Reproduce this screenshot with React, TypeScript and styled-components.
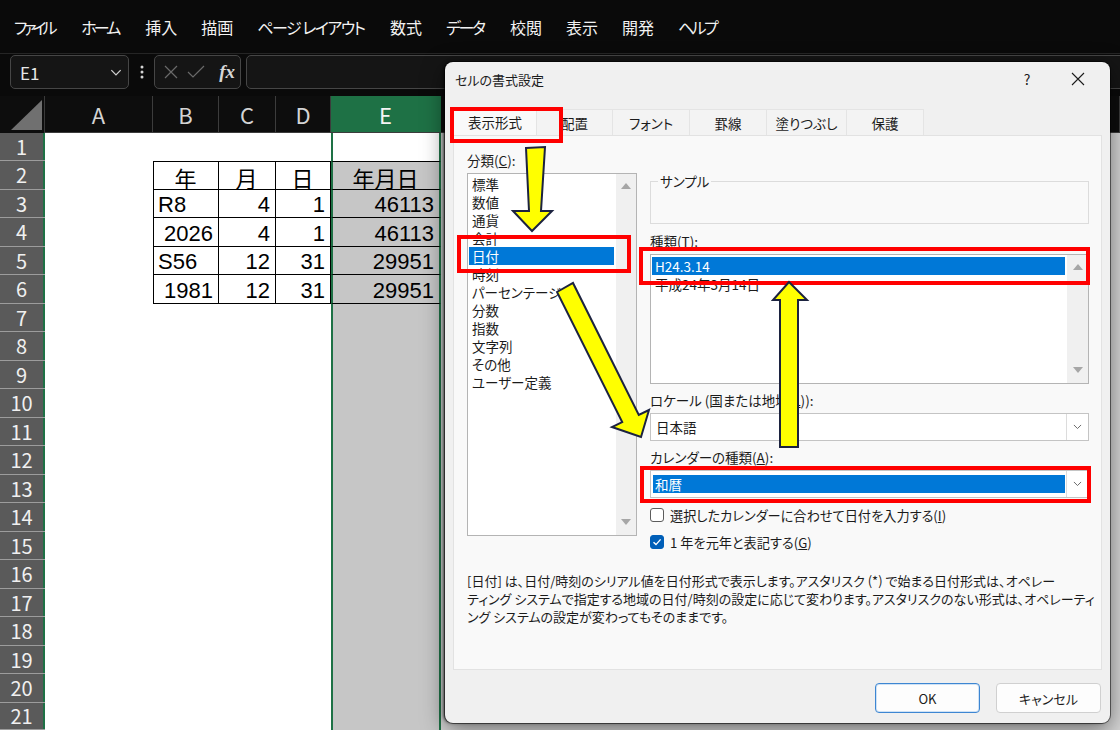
import React from "react";
import styled, { createGlobalStyle } from "styled-components";

const UI = `"Noto Sans CJK JP", "Noto Sans", sans-serif`;
const CELL = `"Liberation Sans", "Noto Sans CJK JP", sans-serif`;
const GREEN = "#1e7145";
const BLUE = "#0078d7";

const GlobalStyle = createGlobalStyle`
  html, body { margin: 0; padding: 0; background: #0a0a0a; }
  #root { width: 1120px; height: 730px; }
`;

const Page = styled.div`
  position: relative;
  width: 1120px;
  height: 730px;
  overflow: hidden;
  background: #0a0a0a;
  display: flex;
  flex-direction: column;
`;

/* ---------- ribbon tabs ---------- */

const MenuBar = styled.nav`
  height: 53px;
  flex-shrink: 0;
  display: flex;
  align-items: center;
  gap: 24px;
  padding-left: 14px;
  border-bottom: 1px solid #252525;
  font-family: ${UI};
  font-feature-settings: "palt";
  font-size: 16px;
  color: #f2f2f2;
`;

const MenuItem = styled.span<{ $track?: number }>`
  white-space: pre;
  letter-spacing: ${(p) => p.$track ?? 0}px;
  margin-right: ${(p) => -(p.$track ?? 0)}px;
`;

/* ---------- formula bar ---------- */

const FormulaBar = styled.div`
  height: 42px;
  flex-shrink: 0;
  box-sizing: border-box;
  padding: 1px 0 0 10px;
  display: flex;
  align-items: flex-start;
`;

const Field = styled.div`
  height: 34px;
  box-sizing: border-box;
  border: 1px solid #464646;
  border-radius: 5px;
  background: #151515;
  display: flex;
  align-items: center;
`;

const NameBox = styled(Field)`
  width: 119px;
  padding: 0 6px 0 9px;
  justify-content: space-between;
  color: #e8e8e8;
  font: 17px ${UI};
`;

const MoreDots = styled.div`
  width: 25px;
  height: 34px;
  display: flex;
  align-items: center;
  justify-content: center;
`;

const FxBox = styled(Field)`
  width: 87px;
  padding: 0 5px 0 8px;
  gap: 8px;
`;

const FxLabel = styled.span`
  margin-left: auto;
  font: italic bold 19px "Liberation Serif", serif;
  color: #d6d6d6;
`;

const FormulaInput = styled(Field)`
  flex: 1;
  margin-left: 5px;
  margin-right: -12px;
`;

/* ---------- sheet ---------- */

const Sheet = styled.div`
  flex: 1;
  min-height: 0;
  display: grid;
  grid-template-columns: 45px 108px 66px 57px 55px 110px 1fr;
  grid-template-rows: 37px repeat(10, 28px 29px) 27px;
  background: #fff;
`;

const Corner = styled.div`
  background: #0d0d0d;
  border-right: 1px solid #3a3a3a;
  display: flex;
  align-items: flex-end;
  justify-content: flex-end;
  padding: 0 2px 3px 0;
`;

const CornerTriangle = styled.div`
  width: 31px;
  height: 30px;
  background: #707070;
  clip-path: polygon(100% 0, 100% 100%, 0 100%);
`;

const ColHead = styled.div<{ $active?: boolean }>`
  box-sizing: border-box;
  background: ${(p) => (p.$active ? GREEN : "#0d0d0d")};
  color: ${(p) => (p.$active ? "#f4f4f4" : "#d4d4d4")};
  border-right: 1px solid ${(p) => (p.$active ? GREEN : "#3c3c3c")};
  border-bottom: 1px solid #3c3c3c;
  display: flex;
  align-items: center;
  justify-content: center;
  font: 22px ${UI};
`;

const RowHead = styled.div`
  box-sizing: border-box;
  background: #5a5a5a;
  color: #f0f0f0;
  border-bottom: 1px solid #9c9c9c;
  box-shadow: inset -2px 0 ${GREEN};
  display: flex;
  align-items: center;
  justify-content: center;
  padding-right: 2px;
  font: 20px/24px ${UI};
`;

type Align = "left" | "right" | "center";

const Cell = styled.div<{
  $align?: Align;
  $boxed?: boolean;
  $top?: boolean;
  $left?: boolean;
  $sel?: boolean;
  $colE?: boolean;
  $shade?: boolean;
}>`
  box-sizing: border-box;
  display: flex;
  align-items: center;
  justify-content: ${(p) =>
    p.$align === "right" ? "flex-end" : p.$align === "center" ? "center" : "flex-start"};
  padding: 3px 5px 0 4px;
  font: 22px ${CELL};
  color: #000;
  white-space: nowrap;
  background: ${(p) => (p.$sel ? "#c6c6c6" : p.$shade ? "#d4d4d4" : "#fff")};
  border-bottom: ${(p) => (p.$boxed ? "1px solid #000" : "none")};
  border-top: ${(p) => (p.$top ? "1px solid #000" : "none")};
  border-left: ${(p) => (p.$colE ? `2px solid ${GREEN}` : p.$left ? "1px solid #000" : "none")};
  border-right: ${(p) => (p.$colE ? `2px solid ${GREEN}` : p.$boxed ? "1px solid #000" : "none")};
`;

/* ---------- dialog ---------- */

const Dialog = styled.section`
  position: absolute;
  left: 445px;
  top: 62px;
  width: 665px;
  height: 661px;
  box-sizing: border-box;
  padding: 0 8px;
  background: #f0f0f0;
  border-radius: 8px;
  box-shadow: 0 0 0 1px rgba(0, 0, 0, 0.5), -2px 0 3px rgba(0, 0, 0, 0.5), 0 6px 22px rgba(0, 0, 0, 0.5);
  display: flex;
  flex-direction: column;
  font-family: ${UI};
  font-feature-settings: "palt";
  font-size: 13.5px;
  color: #1b1b1b;
`;

const TitleBar = styled.header`
  height: 34px;
  display: flex;
  align-items: center;
  padding-left: 2px;
`;

const Title = styled.span`
  flex: 1;
  font-size: 13px;
`;

const HelpMark = styled.span`
  width: 30px;
  text-align: center;
  font-size: 14px;
  margin-right: 12px;
`;

const CloseBtn = styled.span`
  width: 48px;
  display: flex;
  justify-content: center;
`;

const TabStrip = styled.div`
  margin-top: 12px;
  height: 27px;
  display: flex;
  align-items: flex-end;
`;

const Tab = styled.div<{ $w: number; $active?: boolean }>`
  width: ${(p) => p.$w}px;
  height: ${(p) => (p.$active ? 27 : 26)}px;
  box-sizing: border-box;
  display: flex;
  align-items: center;
  justify-content: center;
  background: ${(p) => (p.$active ? "#f9f9f9" : "#f3f3f3")};
  border: 1px solid #e4e4e4;
  border-bottom: none;
  margin-right: -1px;
  white-space: nowrap;
`;

const Panel = styled.div`
  height: 535px;
  box-sizing: border-box;
  background: #f9f9f9;
  border: 1px solid #e2e2e2;
  padding: 15px 14px 0 13px;
`;

const Columns = styled.div`
  display: grid;
  grid-template-columns: 170px 439px;
  column-gap: 13px;
  align-items: start;
`;

const Column = styled.div`
  display: flex;
  flex-direction: column;
`;

const Label = styled.div<{ $gap?: number }>`
  height: 18px;
  line-height: 18px;
  margin-top: ${(p) => p.$gap ?? 0}px;
  margin-bottom: 4px;
  white-space: nowrap;
`;

const ListBox = styled.div<{ $h: number }>`
  height: ${(p) => p.$h}px;
  box-sizing: border-box;
  border: 1px solid #b4b4b4;
  background: #fff;
  display: flex;
`;

const ListItems = styled.div<{ $padTop?: number }>`
  flex: 1;
  padding: ${(p) => p.$padTop ?? 1}px 2px 0 1px;
`;

const ListItem = styled.div<{ $selected?: boolean }>`
  height: 18px;
  line-height: 18px;
  padding-left: 3px;
  white-space: nowrap;
  background: ${(p) => (p.$selected ? BLUE : "transparent")};
  color: ${(p) => (p.$selected ? "#fff" : "#1b1b1b")};
`;

const ScrollBar = styled.div<{ $w: number }>`
  width: ${(p) => p.$w}px;
  background: #f0f0f0;
  display: flex;
  flex-direction: column;
  align-items: center;
  justify-content: space-between;
  padding: 9px 0 10px;
`;

const ScrollArrow = styled.span<{ $down?: boolean }>`
  width: 0;
  height: 0;
  border-left: 5px solid transparent;
  border-right: 5px solid transparent;
  ${(p) => (p.$down ? "border-top: 6px solid #a6a6a6;" : "border-bottom: 6px solid #a6a6a6;")}
`;

const GroupBox = styled.div`
  position: relative;
  margin-top: 30px;
  height: 43px;
  box-sizing: border-box;
  border: 1px solid #dcdcdc;
`;

const GroupLegend = styled.span`
  position: absolute;
  left: 7px;
  top: -10px;
  padding: 0 2px;
  line-height: 18px;
  background: #f9f9f9;
`;

const Combo = styled.div`
  height: 28px;
  box-sizing: border-box;
  border: 1px solid #c4c4c4;
  background: #fff;
  display: flex;
`;

const ComboValue = styled.div<{ $selected?: boolean }>`
  flex: 1;
  margin: 4px 1px 4px 2px;
  padding-left: ${(p) => (p.$selected ? 2 : 3)}px;
  line-height: 18px;
  background: ${(p) => (p.$selected ? BLUE : "transparent")};
  color: ${(p) => (p.$selected ? "#fff" : "#1b1b1b")};
`;

const ComboButton = styled.div`
  width: 21px;
  border-left: 1px solid #dcdcdc;
  display: flex;
  align-items: center;
  justify-content: center;
`;

const CheckRow = styled.label<{ $gap: number }>`
  margin-top: ${(p) => p.$gap}px;
  height: 18px;
  display: flex;
  align-items: center;
  gap: 6px;
  white-space: nowrap;
  font-size: 13.2px;
`;

const CheckBox = styled.span<{ $checked?: boolean }>`
  width: 14px;
  height: 14px;
  box-sizing: border-box;
  border-radius: 3px;
  border: 1px solid ${(p) => (p.$checked ? "#005fb8" : "#5c5c5c")};
  background: ${(p) => (p.$checked ? "#005fb8" : "#fff")};
  display: flex;
  align-items: center;
  justify-content: center;
`;

const Description = styled.p`
  margin: 21px 0 0;
  font-size: 13px;
  line-height: 18px;
  white-space: nowrap;
`;

const Footer = styled.footer`
  margin-top: 13px;
  display: flex;
  justify-content: flex-end;
  gap: 16px;
  padding-right: 1px;
`;

const Button = styled.button<{ $primary?: boolean }>`
  width: 105px;
  height: 30px;
  border-radius: 4px;
  background: #fdfdfd;
  border: 1px solid ${(p) => (p.$primary ? "#3d86d2" : "#d0d0d0")};
  box-shadow: ${(p) => (p.$primary ? "inset 0 0 0 1px #cfe2f5" : "none")};
  font: 13px ${UI};
  font-feature-settings: "palt";
  color: #1b1b1b;
`;

/* ---------- annotation overlay ---------- */

const Overlay = styled.svg`
  position: absolute;
  left: 0;
  top: 0;
  pointer-events: none;
`;

/* ---------- data ---------- */

const menus: [string, number][] = [
  ["ファイル", -4],
  ["ホーム", -3],
  ["挿入", 0],
  ["描画", 0],
  ["ページ レイアウト", -1.5],
  ["数式", 0],
  ["データ", -2.4],
  ["校閲", 0],
  ["表示", 0],
  ["開発", 0],
  ["ヘルプ", -2.6],
];
const columns = ["A", "B", "C", "D", "E"];

type CellDef = [string, Align];
const table: Record<number, CellDef[]> = {
  2: [["年", "center"], ["月", "center"], ["日", "center"], ["年月日", "center"]],
  3: [["R8", "left"], ["4", "right"], ["1", "right"], ["46113", "right"]],
  4: [["2026", "right"], ["4", "right"], ["1", "right"], ["46113", "right"]],
  5: [["S56", "left"], ["12", "right"], ["31", "right"], ["29951", "right"]],
  6: [["1981", "right"], ["12", "right"], ["31", "right"], ["29951", "right"]],
};

const categories = ["標準", "数値", "通貨", "会計", "日付", "時刻", "パーセンテージ", "分数", "指数", "文字列", "その他", "ユーザー定義"];

const tabs: [string, number][] = [
  ["表示形式", 84], ["配置", 77], ["フォント", 78], ["罫線", 78], ["塗りつぶし", 81], ["保護", 78],
];

function Chevron({ color = "#6a6a6a", size = 9 }: { color?: string; size?: number }) {
  return (
    <svg width={size} height={size / 2 + 1} viewBox="0 0 10 6">
      <polyline points="1,1 5,5 9,1" fill="none" stroke={color} strokeWidth="1.1" />
    </svg>
  );
}

function SheetGrid() {
  const cells: React.ReactNode[] = [];
  cells.push(
    <Corner key="corner">
      <CornerTriangle />
    </Corner>
  );
  columns.forEach((c) => {
    cells.push(<ColHead key={c} $active={c === "E"}>{c}</ColHead>);
  });
  cells.push(<ColHead key="F" />);
  for (let r = 1; r <= 21; r++) {
    cells.push(<RowHead key={`h${r}`}>{r}</RowHead>);
    const row = table[r];
    // column A
    cells.push(<Cell key={`a${r}`} />);
    for (let c = 0; c < 4; c++) {
      const def = row?.[c];
      const isE = c === 3;
      cells.push(
        <Cell
          key={`${r}-${c}`}
          $align={def?.[1]}
          $boxed={!!row}
          $top={r === 2}
          $left={c === 0 && !!row}
          $colE={isE}
          $sel={isE && r > 1}
        >
          {def?.[0]}
        </Cell>
      );
    }
    // column F, mostly hidden behind the dialog
    cells.push(<Cell key={`f${r}`} $shade />);
  }
  return <Sheet>{cells}</Sheet>;
}

function FormatDialog() {
  return (
    <Dialog>
      <TitleBar>
        <Title>セルの書式設定</Title>
        <HelpMark>?</HelpMark>
        <CloseBtn>
          <svg width="14" height="14" viewBox="0 0 14 14">
            <path d="M1 1 L13 13 M13 1 L1 13" stroke="#1b1b1b" strokeWidth="1.1" />
          </svg>
        </CloseBtn>
      </TitleBar>

      <TabStrip>
        {tabs.map(([t, w], i) => (
          <Tab key={t} $w={w} $active={i === 0}>{t}</Tab>
        ))}
      </TabStrip>

      <Panel>
        <Columns>
          <Column>
            <Label>分類(<u>C</u>):</Label>
            <ListBox $h={363}>
              <ListItems>
                {categories.map((c) => (
                  <ListItem key={c} $selected={c === "日付"}>{c}</ListItem>
                ))}
              </ListItems>
              <ScrollBar $w={20}>
                <ScrollArrow />
                <ScrollArrow $down />
              </ScrollBar>
            </ListBox>
          </Column>

          <Column>
            <GroupBox>
              <GroupLegend>サンプル</GroupLegend>
            </GroupBox>
            <Label $gap={8}>種類(<u>T</u>):</Label>
            <ListBox $h={130}>
              <ListItems $padTop={2}>
                <ListItem $selected>H24.3.14</ListItem>
                <ListItem>平成24年3月14日</ListItem>
              </ListItems>
              <ScrollBar $w={21}>
                <ScrollArrow />
                <ScrollArrow $down />
              </ScrollBar>
            </ListBox>
            <Label $gap={7}>ロケール (国または地域(<u>L</u>)):</Label>
            <Combo>
              <ComboValue>日本語</ComboValue>
              <ComboButton><Chevron /></ComboButton>
            </Combo>
            <Label $gap={7}>カレンダーの種類(<u>A</u>):</Label>
            <Combo>
              <ComboValue $selected>和暦</ComboValue>
              <ComboButton><Chevron /></ComboButton>
            </Combo>
            <CheckRow $gap={8}>
              <CheckBox />
              <span>選択したカレンダーに合わせて日付を入力する(<u>I</u>)</span>
            </CheckRow>
            <CheckRow $gap={9}>
              <CheckBox $checked>
                <svg width="10" height="10" viewBox="0 0 10 10">
                  <polyline points="1.5,5.2 4,7.6 8.6,2.4" fill="none" stroke="#fff" strokeWidth="1.4" />
                </svg>
              </CheckBox>
              <span>1 年を元年と表記する(<u>G</u>)</span>
            </CheckRow>
          </Column>
        </Columns>

        <Description>
          [日付] は、日付/時刻のシリアル値を日付形式で表示します。アスタリスク (*) で始まる日付形式は、オペレー
          <br />
          ティング システムで指定する地域の日付/時刻の設定に応じて変わります。アスタリスクのない形式は、オペレーティ
          <br />
          ング システムの設定が変わってもそのままです。
        </Description>
      </Panel>

      <Footer>
        <Button $primary>OK</Button>
        <Button>キャンセル</Button>
      </Footer>
    </Dialog>
  );
}

function Annotations() {
  const arrow = { fill: "#ffff00", stroke: "#1c2340", strokeWidth: 2, strokeLinejoin: "miter" as const };
  const box = { fill: "none", stroke: "#ff0000", strokeWidth: 4 };
  return (
    <Overlay width="1120" height="730" viewBox="0 0 1120 730">
      <rect x="452" y="109" width="109" height="32" {...box} />
      <rect x="459" y="237" width="170" height="34" {...box} />
      <rect x="641" y="249" width="447" height="34" {...box} />
      <rect x="642" y="468" width="447" height="33" {...box} />
      <polygon points="526,148 545,147 541,211 552,211 532,231 513,211 529,211" {...arrow} />
      <polygon points="557,292 573,283 638.8,414.9 649,410 641,437 612,427 622.2,422.1" {...arrow} />
      <polygon points="780,447 798,447 798,300 807,300 789,282 773,300 780,300" {...arrow} />
    </Overlay>
  );
}

export default function App() {
  return (
    <>
      <GlobalStyle />
      <Page>
        <MenuBar>
          {menus.map(([m, t]) => (
            <MenuItem key={m} $track={t}>{m}</MenuItem>
          ))}
        </MenuBar>

        <FormulaBar>
          <NameBox>
            E1
            <Chevron color="#d0d0d0" size={12} />
          </NameBox>
          <MoreDots>
            <svg width="4" height="14" viewBox="0 0 4 14">
              <circle cx="2" cy="2" r="1.5" fill="#d4d4d4" />
              <circle cx="2" cy="7" r="1.5" fill="#d4d4d4" />
              <circle cx="2" cy="12" r="1.5" fill="#d4d4d4" />
            </svg>
          </MoreDots>
          <FxBox>
            <svg width="16" height="16" viewBox="0 0 16 16">
              <path d="M2 2 L14 14 M14 2 L2 14" stroke="#6a6a6a" strokeWidth="1.2" />
            </svg>
            <svg width="18" height="16" viewBox="0 0 18 16">
              <polyline points="1,8 6,13 17,2" fill="none" stroke="#6a6a6a" strokeWidth="1.2" />
            </svg>
            <FxLabel>fx</FxLabel>
          </FxBox>
          <FormulaInput />
        </FormulaBar>

        <SheetGrid />
        <FormatDialog />
        <Annotations />
      </Page>
    </>
  );
}
